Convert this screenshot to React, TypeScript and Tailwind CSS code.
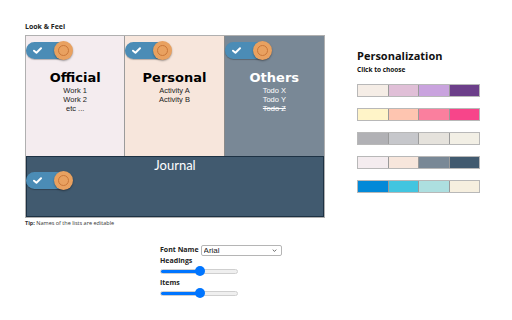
import React from "react";

const PALETTES = [
  ["#f5ede6", "#e0bfd7", "#c9a3de", "#6c3f8a"],
  ["#fff4c8", "#fec5b0", "#fa7f9e", "#f7458a"],
  ["#b1b1b5", "#c6c7cb", "#e5e2dc", "#f2efe5"],
  ["#f4ecef", "#f7e6dc", "#798896", "#415a6f"],
  ["#0289d8", "#42c5e0", "#addfe0", "#f6efdf"],
];

function Toggle() {
  return (
    <div className="flex items-center w-[46px] h-[17px] rounded-full bg-[#4b8cb6] shadow-[0_1px_1px_rgba(0,0,0,0.25)]">
      <svg viewBox="0 0 10 8" className="w-[9px] h-[7px] ml-[7px]">
        <path d="M1 4.2 L3.8 6.6 L9 1.4" fill="none" stroke="white" strokeWidth="2.2" strokeLinecap="round" strokeLinejoin="round" />
      </svg>
      <div className="ml-auto mr-[-1px] w-[19px] h-[19px] rounded-full bg-[#e9a160] shadow-[0_1px_2px_rgba(0,0,0,0.35)] flex items-center justify-center">
        <div className="w-[11px] h-[11px] rounded-full border border-[#c9773a]" />
      </div>
    </div>
  );
}

function Slider() {
  return (
    <input
      type="range"
      defaultValue={52}
      className="w-[78px] h-[5px] m-0 appearance-none rounded-full border border-[#cfcfcf] bg-[linear-gradient(to_right,#0075ff_0%,#0075ff_52%,#efefef_52%,#efefef_100%)] [&::-webkit-slider-thumb]:appearance-none [&::-webkit-slider-thumb]:w-[10px] [&::-webkit-slider-thumb]:h-[10px] [&::-webkit-slider-thumb]:rounded-full [&::-webkit-slider-thumb]:bg-[#0075ff]"
    />
  );
}

function ListCard({
  title,
  items,
  bg,
  dark,
  border,
}: {
  title: string;
  items: { text: string; strike?: boolean }[];
  bg: string;
  dark?: boolean;
  border?: string;
}) {
  return (
    <div className={`flex flex-col w-[100px] pt-[6px] ${bg} ${border ?? ""}`}>
      <Toggle />
      <div
        className={`mt-[12px] text-center text-[13px] font-bold leading-[14px] ${dark ? "text-white" : "text-black"}`}
        style={{ fontFamily: "'DejaVu Sans', Verdana, sans-serif" }}
      >
        {title}
      </div>
      <div className={`flex flex-col items-center text-[7.5px] leading-[9px] mt-[1px] ${dark ? "text-white" : "text-[#222]"}`}>
        {items.map((it) => (
          <span key={it.text} className={it.strike ? "line-through" : ""}>
            {it.text}
          </span>
        ))}
      </div>
    </div>
  );
}

export default function App() {
  return (
    <div className="w-[512px] h-[320px] bg-white" style={{ fontFamily: "'Liberation Sans', Arial, sans-serif" }}>
      <div className="flex pl-[25px] pt-[22px]">
        <div className="flex flex-col w-[300px]">
          <div className="text-[7px] font-bold leading-[10px] text-[#222] mb-[3px]" style={{ fontFamily: "'Open Sans', sans-serif" }}>
            Look &amp; Feel
          </div>
          <div className="flex flex-col border border-[#b0b0b0]">
            <div className="flex h-[120px]">
              <ListCard
                title="Official"
                bg="bg-[#f4ecef]"
                border="border-r border-[#9b9b9b]"
                items={[{ text: "Work 1" }, { text: "Work 2" }, { text: "etc ..." }]}
              />
              <ListCard
                title="Personal"
                bg="bg-[#f7e6dc]"
                border="border-r border-[#8a8a8a]"
                items={[{ text: "Activity A" }, { text: "Activity B" }]}
              />
              <ListCard
                title="Others"
                bg="bg-[#798896]"
                dark
                items={[{ text: "Todo X" }, { text: "Todo Y" }, { text: "Todo Z", strike: true }]}
              />
            </div>
            <div className="flex flex-col h-[61px] bg-[#415a6f] border border-[#1d3244]">
              <div className="text-center text-white text-[13px] leading-[16px]" style={{ fontFamily: "Lato, 'Open Sans', sans-serif" }}>
                Journal
              </div>
              <div className="-ml-[1px] -mt-[1px]">
                <Toggle />
              </div>
            </div>
          </div>
          <div className="text-[5.5px] leading-[8px] mt-[1px] text-[#333]" style={{ fontFamily: "'Open Sans', sans-serif" }}>
            <span className="font-bold">Tip:</span> Names of the lists are editable
          </div>
        </div>
        <div className="flex flex-col ml-[32px] mt-[27px]" style={{ fontFamily: "'Open Sans', sans-serif" }}>
          <div className="text-[11px] font-bold leading-[14px] text-[#111]">Personalization</div>
          <div className="text-[6.5px] font-bold leading-[9px] text-[#111] mt-[2px]">Click to choose</div>
          <div className="flex flex-col gap-[11px] mt-[10px]">
            {PALETTES.map((row, i) => (
              <div key={i} className="flex w-[123px] h-[13px] border border-[#b8b8b8]">
                {row.map((c, j) => (
                  <div
                    key={c}
                    className={`flex-1 ${j < 3 ? "border-r border-[#9a9a9a]" : ""}`}
                    style={{ backgroundColor: c }}
                  />
                ))}
              </div>
            ))}
          </div>
        </div>
      </div>
      <div className="flex flex-col ml-[160px] mt-[18px] text-[7px] text-[#222]" style={{ fontFamily: "'Open Sans', sans-serif" }}>
        <div className="flex items-center gap-[2px]">
          <span className="font-bold">Font Name</span>
          <div className="flex items-center w-[81px] h-[11px] border border-[#b5b5b5] rounded-[2px] bg-white">
            <select
              className="flex-1 min-w-0 h-full appearance-none text-[8px] leading-[9px] px-[2px] bg-transparent outline-none"
              defaultValue="Arial"
              style={{ fontFamily: "'Liberation Sans', Arial, sans-serif" }}
            >
              <option>Arial</option>
            </select>
            <svg viewBox="0 0 8 5" className="w-[5px] h-[3px] mr-[4px]">
              <path d="M1 1 L4 4 L7 1" fill="none" stroke="#333" strokeWidth="1.2" />
            </svg>
          </div>
        </div>
        <span className="font-bold leading-[9px]">Headings</span>
        <div className="flex items-center h-[12px]">
          <Slider />
        </div>
        <span className="font-bold leading-[9px] mt-[1px]">Items</span>
        <div className="flex items-center h-[12px]">
          <Slider />
        </div>
      </div>
    </div>
  );
}
